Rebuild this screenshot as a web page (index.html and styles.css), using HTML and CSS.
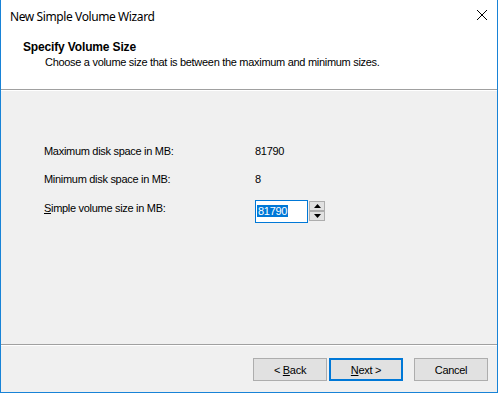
FILE: index.html
```html
<!DOCTYPE html>
<html>
<head>
<meta charset="utf-8">
<link rel="stylesheet" href="styles.css">
</head>
<body>
<div class="window">
  <div class="titlebar">
    <span class="title">New Simple Volume Wizard</span>
    <svg class="close" width="12" height="12" viewBox="0 0 12 12"><path d="M1 1L11 11M11 1L1 11" stroke="#000" stroke-width="1" fill="none"/></svg>
  </div>
  <div class="header">
    <div class="heading">Specify Volume Size</div>
    <div class="subtitle">Choose a volume size that is between the maximum and minimum sizes.</div>
  </div>
  <div class="content">
    <div class="row">
      <span class="label">Maximum disk space in MB:</span>
      <span class="value">81790</span>
    </div>
    <div class="row">
      <span class="label">Minimum disk space in MB:</span>
      <span class="value">8</span>
    </div>
    <div class="row row-input">
      <span class="label label-input"><u>S</u>imple volume size in MB:</span>
      <div class="spinner">
        <div class="field"><span class="sel">81790</span></div>
        <div class="spin">
          <div class="spin-btn"><svg width="7" height="4" viewBox="0 0 7 4"><path d="M3.5 0L7 4H0Z" fill="#000"/></svg></div>
          <div class="spin-btn"><svg width="7" height="4" viewBox="0 0 7 4"><path d="M0 0H7L3.5 4Z" fill="#000"/></svg></div>
        </div>
      </div>
    </div>
  </div>
  <div class="footer">
    <button class="btn back">&lt; <u>B</u>ack</button>
    <button class="btn next"><u>N</u>ext &gt;</button>
    <button class="btn cancel">Cancel</button>
  </div>
</div>
</body>
</html>
```
FILE: styles.css
```css
html, body {
  margin: 0;
  padding: 0;
  background: #ffffff;
}
.window {
  box-sizing: border-box;
  width: 498px;
  height: 393px;
  border: 1px solid #1883d7;
  border-top: none;
  display: flex;
  flex-direction: column;
  font-family: "Liberation Sans", Arial, sans-serif;
  font-size: 11px;
  letter-spacing: -0.3px;
  color: #000;
}
.titlebar {
  height: 30px;
  flex: none;
  display: flex;
  align-items: center;
  justify-content: space-between;
  padding: 0 9px 0 9px;
  background: #fff;
}
.title {
  font-family: "Noto Sans", "Open Sans", sans-serif;
  font-size: 12px;
  letter-spacing: -0.4px;
  position: relative;
  top: 1px;
}
.close {
  display: block;
}
.header {
  height: 60px;
  flex: none;
  box-sizing: border-box;
  padding: 11px 0 0 22px;
  background: #fff;
  border-bottom: 1px solid #a0a0a0;
}
.heading {
  font-weight: bold;
  font-size: 12px;
  line-height: 13px;
  letter-spacing: -0.15px;
}
.subtitle {
  line-height: 13px;
  margin-top: 2px;
  padding-left: 22px;
}
.content {
  height: 254px;
  flex: none;
  box-sizing: content-box;
  background: #f0f0f0;
  padding: 0 0 0 43px;
  border-bottom: 1px solid #a0a0a0;
  box-shadow: inset 0 1px 0 #ffffff;
}
.row:first-child {
  margin-top: 55px;
}
.row {
  display: flex;
  align-items: flex-start;
  line-height: 13px;
  margin-bottom: 15px;
}
.row-input {
  margin-top: -1px;
}
.label {
  width: 211px;
  flex: none;
}
.label-input {
  padding-top: 2px;
}
.spinner {
  display: flex;
  align-items: flex-start;
  gap: 1px;
}
.field {
  box-sizing: border-box;
  width: 53px;
  height: 23px;
  background: #fff;
  border: 1px solid #0078d7;
  padding: 4px 0 0 1px;
}
.sel {
  background: #0078d7;
  color: #fff;
  display: inline-block;
  line-height: 12px;
  padding: 0 1px;
}
.spin {
  display: flex;
  flex-direction: column;
  margin-top: 1px;
}
.spin-btn {
  box-sizing: border-box;
  width: 16px;
  height: 10px;
  background: #e1e1e1;
  border: 1px solid #adadad;
  display: flex;
  align-items: center;
  justify-content: center;
}
.footer {
  flex: 1;
  background: #f0f0f0;
  display: flex;
  align-items: flex-start;
  justify-content: flex-end;
  padding: 13px 9px 0 0;
  box-shadow: inset 0 1px 0 #ffffff;
}
.btn {
  box-sizing: border-box;
  width: 74px;
  height: 23px;
  background: #e1e1e1;
  border: 1px solid #adadad;
  font-family: "Liberation Sans", Arial, sans-serif;
  font-size: 11px;
  letter-spacing: -0.3px;
  color: #000;
  padding: 0;
  margin: 0;
}
.next {
  border: 2px solid #0078d7;
  margin-left: 2px;
}
.cancel {
  margin-left: 11px;
}
```
